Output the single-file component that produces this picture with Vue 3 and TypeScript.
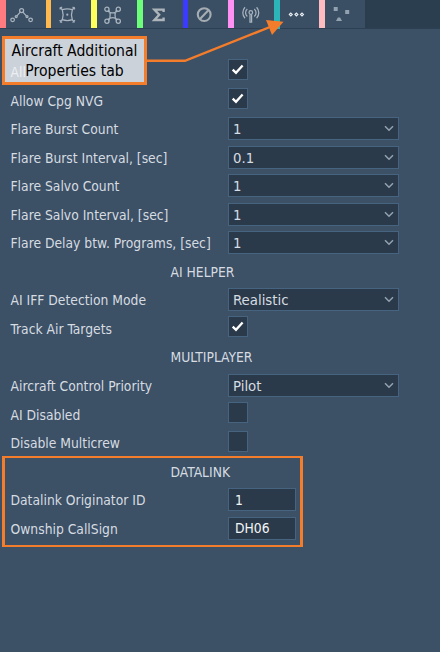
<script setup lang="ts">
interface Tab { id: string; color: string }
interface Row {
  kind: 'check' | 'select' | 'input' | 'heading'
  label: string
  value?: string
  checked?: boolean
}

const tabs: Tab[] = [
  { id: 'route', color: '#ff7b80' },
  { id: 'target', color: '#ffb94f' },
  { id: 'command', color: '#ffff5c' },
  { id: 'sum', color: '#6cff7a' },
  { id: 'none', color: '#3b3bff' },
  { id: 'radio', color: '#ff90f4' },
  { id: 'more', color: '#2bb5b8' },
  { id: 'shapes', color: '#ffbcc0' },
]

const rows: Row[] = [
  { kind: 'check', label: 'All', checked: true },
  { kind: 'check', label: 'Allow Cpg NVG', checked: true },
  { kind: 'select', label: 'Flare Burst Count', value: '1' },
  { kind: 'select', label: 'Flare Burst Interval, [sec]', value: '0.1' },
  { kind: 'select', label: 'Flare Salvo Count', value: '1' },
  { kind: 'select', label: 'Flare Salvo Interval, [sec]', value: '1' },
  { kind: 'select', label: 'Flare Delay btw. Programs, [sec]', value: '1' },
  { kind: 'heading', label: 'AI HELPER' },
  { kind: 'select', label: 'AI IFF Detection Mode', value: 'Realistic' },
  { kind: 'check', label: 'Track Air Targets', checked: true },
  { kind: 'heading', label: 'MULTIPLAYER' },
  { kind: 'select', label: 'Aircraft Control Priority', value: 'Pilot' },
  { kind: 'check', label: 'AI Disabled', checked: false },
  { kind: 'check', label: 'Disable Multicrew', checked: false },
  { kind: 'heading', label: 'DATALINK' },
  { kind: 'input', label: 'Datalink Originator ID', value: '1' },
  { kind: 'input', label: 'Ownship CallSign', value: 'DH06' },
]
</script>

<template>
  <div class="panel">
    <nav class="tabs">
      <div v-for="t in tabs" :key="t.id" class="tab" :class="t.id">
        <span class="strip" :style="{ background: t.color }"></span>
        <svg class="icon" viewBox="0 0 40 28" width="40" height="28">
          <g v-if="t.id === 'route'" class="line">
            <circle cx="6.6" cy="19.8" r="1.8" /><circle cx="10.2" cy="16.6" r="1" />
            <circle cx="15.6" cy="10.6" r="2" /><circle cx="21" cy="16.6" r="1" />
            <circle cx="24.6" cy="19.8" r="1.8" />
            <path d="M10.9 15.8l3.400-3.700M16.900 12.100l3.400 3.700" />
          </g>
          <g v-else-if="t.id === 'target'" class="line">
            <path d="M11.300 9.700Q16.300 8 21.300 9.700Q19.700 14.700 21.300 19.700Q16.300 21.400 11.300 19.700Q12.900 14.700 11.300 9.700z" />
            <circle class="pip" cx="16.300" cy="14.700" r="1.100" />
            <path d="M8.600 9.300l2.400-2.400M8.900 7.200l2.500 2.500M24 9.300l-2.400-2.400M23.700 7.200l-2.500 2.500M8.600 20.100l2.400 2.400M8.900 22.200l2.500-2.500M24 20.100l-2.400 2.400M23.700 22.200l-2.500-2.500" />
          </g>
          <g v-else-if="t.id === 'command'" class="line">
            <circle cx="9.900" cy="9.300" r="2.100" /><circle cx="21.300" cy="9.300" r="2.100" />
            <circle cx="9.900" cy="21.300" r="2.100" /><circle cx="21.300" cy="21.300" r="2.100" />
            <path d="M11.800 10.200Q14.600 15.300 11.800 20.400M19.400 10.200Q16.600 15.300 19.400 20.400M10.700 11.200Q15.600 14.600 20.500 11.200M10.700 19.400Q15.600 16 20.500 19.400" />
          </g>
          <path v-else-if="t.id === 'sum'" class="sum" d="M20.600 12V9.600H11.400L16.200 14.800L11.400 20H20.600V17.600" />
          <g v-else-if="t.id === 'none'" class="thick">
            <circle cx="16.200" cy="14.600" r="6.400" /><path d="M12 19l8.400-8.800" />
          </g>
          <g v-else-if="t.id === 'radio'" class="line">
            <circle cx="16.800" cy="12.500" r="1.800" /><path d="M16 14.500V22h1.600V14.500" />
            <path d="M13.300 16.500a5 5 0 0 1 0-7.600M20.300 16.500a5 5 0 0 0 0-7.600M11 18.300a8 8 0 0 1 0-11M22.600 18.300a8 8 0 0 0 0-11" />
          </g>
          <path v-else-if="t.id === 'more'" class="dots" d="M9.300 14.500l1.500-1.500 1.500 1.500-1.500 1.500zM14.900 14.500l1.500-1.500 1.500 1.500-1.500 1.500zM20.500 14.500l1.500-1.500 1.500 1.500-1.500 1.500z" />
          <path v-else class="solid" d="M8.700 7h4v4h-4zM20.200 10h4v4h-4zM11 21l1.900-3.400h2.200l1.900 3.400z" />
        </svg>
      </div>
    </nav>

    <main class="rows">
      <div v-for="(r, i) in rows" :key="i" class="row" :class="r.kind">
        <span class="label">{{ r.label }}</span>
        <span v-if="r.kind === 'check'" class="box">
          <svg v-if="r.checked" viewBox="0 0 20 20" width="20" height="20"><path d="M4.700 10.600l3.300 3.200 6.600-7.300" /></svg>
        </span>
        <span v-else-if="r.kind === 'select'" class="field">
          <span class="value">{{ r.value }}</span>
          <svg viewBox="0 0 10 7" width="10" height="7"><path d="M1 1.200l4 4 4-4" /></svg>
        </span>
        <span v-else-if="r.kind === 'input'" class="field short"><span class="value">{{ r.value }}</span></span>
      </div>
    </main>

    <div class="highlight"></div>
    <svg class="arrow" viewBox="0 0 440 100" width="440" height="100">
      <path class="lead" d="M146 60.800H185L270 27" />
      <path class="head" d="M266 20L283.500 21.800L272 35z" />
    </svg>
    <div class="callout"><span>Aircraft Additional</span><span>Properties tab</span></div>
  </div>
</template>

<style>
body { margin: 0; overflow: hidden; }
</style>

<style scoped>
.panel {
  position: relative;
  width: 440px;
  height: 652px;
  overflow: hidden;
  background: #3c5066;
  color: #d6dce1;
  font-family: "DejaVu Sans Condensed", "DejaVu Sans", sans-serif;
  font-stretch: condensed;
  font-size: 13.750px;
}
.tabs {
  display: flex;
  height: 28px;
  background: #2b3e50;
  border-bottom: 1px solid #2d4053;
}
.tab { display: flex; width: 45.65px; height: 28px; background: #3a4e64; }
.strip { width: 5.7px; height: 28px; flex: none; }
.more .strip { height: 29px; }
.icon { flex: none; fill: none; stroke: #a9b4bf; }
.line { stroke-width: 1.25; }
.pip { fill: #a9b4bf; stroke: none; }
.thick { stroke-width: 2.1; stroke: #a5acb2; }
.sum { stroke-width: 2.4; stroke: #adb5ba; }
.dots { stroke: #e6edf2; stroke-width: 1.1; }
.solid { fill: #93a2b0; stroke: none; }
.rows { padding-top: 28.2px; }
.row { display: flex; align-items: center; height: 28.55px; padding-left: 10.5px; }
.label { width: 217.500px; flex: none; white-space: nowrap; line-height: 20px; padding-top: 1px; }
.row:first-child .label { color: #fff; }
.heading { padding-left: 170.500px; }
.box {
  box-sizing: border-box;
  display: flex;
  width: 20px;
  height: 21px;
  margin-top: -3px;
  border: 1px solid #46647f;
  background: #2b3a4a;
}
.box svg { margin: -1px; fill: none; stroke: #fff; stroke-width: 2.3; }
.field {
  box-sizing: border-box;
  display: flex;
  align-items: center;
  justify-content: space-between;
  width: 171px;
  height: 23px;
  padding: 0 4px;
  border: 1px solid #46647f;
  background: #2b3a4a;
  font-size: 14.800px;
}
.field svg { fill: none; stroke: #94a3b1; stroke-width: 1.5; }
.short { width: 68px; padding-left: 6px; color: #f2f5f7; font-size: 13.750px; }
.highlight {
  position: absolute;
  box-sizing: border-box;
  left: 2px;
  top: 456px;
  width: 301px;
  height: 91px;
  border: solid #f47d2b;
  border-width: 2px 3px;
}
.arrow { position: absolute; left: 0; top: 0; }
.lead { fill: none; stroke: #f47d2b; stroke-width: 2.4; }
.head { fill: #f47d2b; }
.callout {
  position: absolute;
  box-sizing: border-box;
  left: 2px;
  top: 36px;
  width: 145px;
  height: 49px;
  display: flex;
  flex-direction: column;
  align-items: center;
  justify-content: center;
  border: 3px solid #f47d2b;
  background: rgba(232, 235, 240, 0.84);
  background-clip: padding-box;
  color: #000;
  font-size: 15.600px;
  line-height: 20px;
  white-space: nowrap;
}
</style>
